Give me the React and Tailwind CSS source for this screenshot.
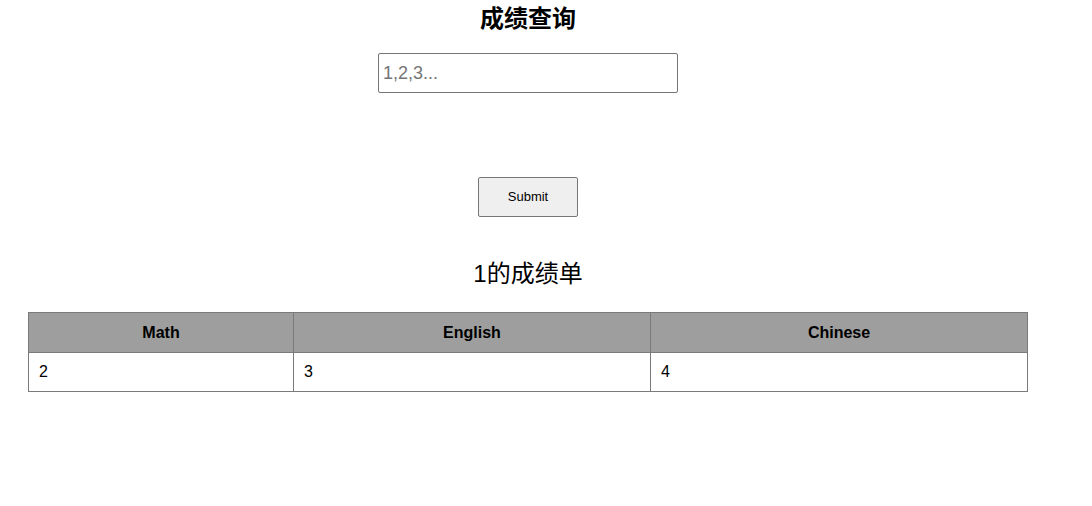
import React, { useState } from "react";

const scores = { Math: 2, English: 3, Chinese: 4 };

export default function App() {
  const [query, setQuery] = useState("");

  return (
    <div
      className="w-[1056px] bg-white text-black"
      style={{ fontFamily: '"Liberation Sans", Arial, "Noto Sans CJK SC", sans-serif' }}
    >
      <div className="flex flex-col items-center">
        <h1 className="mt-[4px] h-[30px] text-[24px] leading-[30px] font-bold">成绩查询</h1>

        <input
          value={query}
          onChange={(e) => setQuery(e.target.value)}
          placeholder="1,2,3..."
          className="mt-[19px] w-[300px] h-[40px] px-[4px] border border-[#767676] rounded-[2px] text-[18px] placeholder:text-[#757575] outline-none"
        />

        <button className="mt-[84px] w-[100px] h-[40px] bg-[#efefef] border border-[#767676] rounded-[2px] text-[13px]">
          Submit
        </button>

        <h2 className="mt-[42px] h-[30px] text-[24px] leading-[30px] font-normal">1的成绩单</h2>
      </div>

      {/* score table */}
      <table className="mt-[23px] ml-[28px] w-[1000px] border-collapse text-[16px]">
        <thead>
          <tr className="h-[40px] bg-[#9e9e9e]">
            <th className="w-[265px] border border-[#7a7a7a] font-bold">Math</th>
            <th className="w-[357px] border border-[#7a7a7a] font-bold">English</th>
            <th className="border border-[#7a7a7a] font-bold">Chinese</th>
          </tr>
        </thead>
        <tbody>
          <tr className="h-[39px]">
            <td className="border border-[#7a7a7a] px-[10px]">{scores.Math}</td>
            <td className="border border-[#7a7a7a] px-[10px]">{scores.English}</td>
            <td className="border border-[#7a7a7a] px-[10px]">{scores.Chinese}</td>
          </tr>
        </tbody>
      </table>
    </div>
  );
}
